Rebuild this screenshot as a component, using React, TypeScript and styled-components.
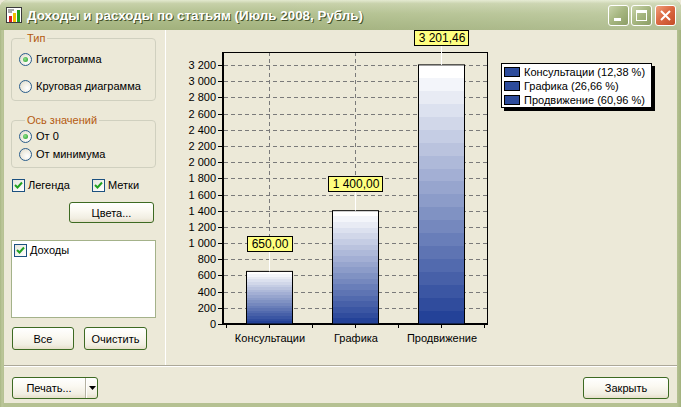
import React from 'react'
import styled, { createGlobalStyle } from 'styled-components'

const GlobalStyle = createGlobalStyle`
  html, body {
    margin: 0;
    padding: 0;
    background: #ece9d8;
  }
  body {
    font-family: "Liberation Sans", Arial, sans-serif;
    font-size: 11px;
    color: #000;
  }
`

const Window = styled.div`
  width: 681px;
  height: 407px;
  display: flex;
  flex-direction: column;
  background: linear-gradient(90deg, #a9b784 0, #bcc79a 2px, #b5c192 4px, #b5c192 calc(100% - 4px), #a3b27e 100%);
  border-radius: 8px 8px 0 0;
  overflow: hidden;
`

const TitleBar = styled.div`
  height: 30px;
  flex: none;
  display: flex;
  align-items: center;
  box-sizing: border-box;
  padding: 0 5px 0 6px;
  background:
    linear-gradient(90deg, rgba(255, 255, 255, 0) 40%, rgba(255, 255, 255, 0.18) 100%),
    linear-gradient(180deg, #e3e9cf 0%, #c6d0a8 12%, #b3c190 45%, #a9b885 75%, #a2b17d 100%);
`

const TitleText = styled.div`
  flex: 1;
  margin-left: 5px;
  font-size: 13.4px;
  font-weight: bold;
  color: #fff;
  text-shadow: 1px 1px 0 #45522a;
  white-space: nowrap;
`

const CaptionButton = styled.div<{ $close?: boolean }>`
  width: 21px;
  height: 21px;
  box-sizing: border-box;
  border: 1px solid #fff;
  border-radius: 3px;
  margin-left: ${p => (p.$close ? 3 : 2)}px;
  display: flex;
  align-items: center;
  justify-content: center;
  background: ${p =>
    p.$close
      ? 'linear-gradient(135deg, #f0a07c 0%, #dc6a43 45%, #c44c26 100%)'
      : 'linear-gradient(135deg, #c8d3aa 0%, #a5b57f 50%, #8c9e66 100%)'};
`

const Frame = styled.div`
  flex: 1;
  margin: 0 4px 4px;
  background: #ece9d8;
  display: flex;
  flex-direction: column;
`

const Main = styled.div`
  height: 335px;
  flex: none;
  display: flex;
  border-bottom: 1px solid #aca899;
`

const LeftPanel = styled.div`
  width: 161px;
  box-sizing: border-box;
  padding: 1px 9px 0 7px;
  display: flex;
  flex-direction: column;
`

const Group = styled.fieldset<{ $gap: number; $pad: string; $top?: number }>`
  margin: ${p => p.$top ?? 0}px 0 0;
  min-width: 0;
  border: 1px solid #d0d0bf;
  border-radius: 4px;
  padding: ${p => p.$pad};
  display: flex;
  flex-direction: column;
  gap: ${p => p.$gap}px;

  legend {
    color: #b45a10;
    padding: 0 2px;
    margin-left: 6px;
    line-height: 14px;
  }
`

const Option = styled.label`
  display: flex;
  align-items: center;
  height: 16px;
  gap: 4px;
  white-space: nowrap;
`

const Radio = styled.span<{ $on?: boolean }>`
  width: 13px;
  height: 13px;
  box-sizing: border-box;
  border-radius: 50%;
  border: 1px solid #2a5d8c;
  background: radial-gradient(circle at 65% 65%, #ffffff 0%, #eeebe0 55%, #d6d3c5 100%);
  display: flex;
  align-items: center;
  justify-content: center;

  &::after {
    content: '';
    display: ${p => (p.$on ? 'block' : 'none')};
    width: 5px;
    height: 5px;
    border-radius: 50%;
    background: radial-gradient(circle at 40% 40%, #8ee08e, #1f9a1f);
  }
`

const Check = styled.span`
  width: 13px;
  height: 13px;
  flex: none;
  box-sizing: border-box;
  border: 1px solid #1c5180;
  background: linear-gradient(135deg, #e6e6de, #ffffff);
  display: flex;
  align-items: center;
  justify-content: center;
`

const CheckRow = styled.div`
  display: flex;
  margin: 10px 0 0 1px;
`

const CheckItem = styled(Option)<{ $w?: number }>`
  width: ${p => (p.$w ? `${p.$w}px` : 'auto')};
  gap: 3px;
  height: 14px;
`

const Button = styled.button<{ $w: number; $h?: number }>`
  width: ${p => p.$w}px;
  height: ${p => p.$h ?? 22}px;
  box-sizing: border-box;
  padding: 0;
  border: 1px solid #3d6a22;
  border-radius: 3px;
  background: linear-gradient(180deg, #ffffff 0%, #fbf9f2 40%, #f1eee2 80%, #e6dfca 100%);
  font-family: inherit;
  font-size: 11px;
  color: #000;
  display: flex;
  align-items: center;
  justify-content: center;
`

const ColorsButton = styled(Button)`
  margin: 10px 0 0 58px;
`

const ListBox = styled.div`
  margin-top: 17px;
  height: 78px;
  box-sizing: border-box;
  border: 1px solid #a4b28a;
  background: #fff;
  padding: 2px 2px;
`

const ButtonRow = styled.div`
  display: flex;
  gap: 10px;
  margin: 9px 0 0 1px;
`

const ChartPanel = styled.div`
  flex: 1;
  border-left: 1px solid #fff;
  display: flex;
  align-items: flex-start;
`

const ChartSvg = styled.svg`
  flex: none;
  display: block;
  font-family: "Liberation Sans", Arial, sans-serif;
  font-size: 11px;
`

const Legend = styled.div`
  margin: 33px 0 0 5px;
  width: 151px;
  box-sizing: border-box;
  border: 1px solid #000;
  background: #fff;
  box-shadow: 3px 3px 0 #000;
  padding: 1px 2px 0 2px;
  display: flex;
  flex-direction: column;
`

const LegendRow = styled.div`
  display: flex;
  align-items: center;
  gap: 4px;
  height: 14px;
  white-space: nowrap;
`

const Swatch = styled.span`
  width: 16px;
  height: 10px;
  box-sizing: border-box;
  border: 1px solid #000;
  background: #2d4c9c;
`

const BottomBar = styled.div`
  flex: 1;
  border-top: 1px solid #fff;
  display: flex;
  justify-content: space-between;
  align-items: flex-start;
  padding: 10px 8px 0;
`

const SplitMain = styled.span`
  flex: 1;
  align-self: stretch;
  display: flex;
  align-items: center;
  justify-content: center;
  border-right: 1px solid #b5b2a2;
`

const SplitArrow = styled.span`
  width: 10px;
  display: flex;
  align-items: center;
  justify-content: center;
  border-left: 1px solid #fff;
  align-self: stretch;
`

const CheckMark = () => (
  <svg width="9" height="9" viewBox="0 0 9 9">
    <path d="M1 4 L3.5 6.5 L8 1.5" fill="none" stroke="#21a121" strokeWidth="2" />
  </svg>
)

const AppIcon = () => (
  <svg width="16" height="16" viewBox="0 0 16 16">
    <rect x="0.5" y="0.5" width="15" height="15" fill="#fff" stroke="#3a3a3a" />
    <rect x="2" y="2.5" width="6" height="1" fill="#555" />
    <rect x="2" y="4.5" width="4" height="1" fill="#555" />
    <rect x="3" y="9" width="3" height="6" fill="#e02020" />
    <rect x="7" y="6" width="3" height="9" fill="#f0c000" />
    <rect x="11" y="3" width="3" height="12" fill="#20a020" />
  </svg>
)

const bars = [
  { name: 'Консультации', value: 650, label: '650,00', share: '12,38', cx: 269 },
  { name: 'Графика', value: 1400, label: '1 400,00', share: '26,66', cx: 355 },
  { name: 'Продвижение', value: 3201.46, label: '3 201,46', share: '60,96', cx: 441 },
]

const X0 = 223
const X1 = 487
const Y0 = 324
const YT = 52
const yOf = (v: number) => Y0 - (v * (Y0 - 65)) / 3200
const fmt = (v: number) => (v >= 1000 ? `${Math.floor(v / 1000)} ${String(v % 1000).padStart(3, '0')}` : String(v))
const labelWidth = (s: string) =>
  s.split('').reduce((w, ch) => w + (ch === ' ' || ch === ',' ? 3 : 6.2), 0) + 11

function mix(t: number) {
  const a = [255, 255, 255]
  const b = [36, 66, 152]
  const c = a.map((x, i) => Math.round(x + (b[i] - x) * t))
  return `rgb(${c[0]},${c[1]},${c[2]})`
}

function BarChart() {
  const ticks = Array.from({ length: 17 }, (_, i) => i * 200)
  const N = 20
  const stops: React.ReactElement[] = []
  for (let i = 0; i < N; i++) {
    const c = mix(i / (N - 1))
    stops.push(<stop key={`a${i}`} offset={i / N} stopColor={c} />)
    stops.push(<stop key={`b${i}`} offset={(i + 1) / N} stopColor={c} />)
  }
  return (
    <ChartSvg width="330" height="335" viewBox="166 30 330 335">
      <defs>
        <linearGradient id="barFill" x1="0" y1="0" x2="0" y2="1">
          {stops}
        </linearGradient>
      </defs>
      {ticks.map(v => (
        <g key={v}>
          {v > 0 && (
            <line x1={X0 + 1} x2={X1} y1={Math.round(yOf(v)) + 0.5} y2={Math.round(yOf(v)) + 0.5} stroke="#7a7a7a" strokeDasharray="4 3" />
          )}
          <line x1={218} x2={X0} y1={Math.round(yOf(v)) + 0.5} y2={Math.round(yOf(v)) + 0.5} stroke="#000" />
          <text x={216} y={Math.round(yOf(v)) + 4} textAnchor="end">
            {fmt(v)}
          </text>
        </g>
      ))}
      {bars.map(b => (
        <line key={b.name} x1={b.cx + 0.5} x2={b.cx + 0.5} y1={YT} y2={Y0} stroke="#7a7a7a" strokeDasharray="4 3" />
      ))}
      <line x1={X0} x2={X1 + 0.5} y1={YT + 0.5} y2={YT + 0.5} stroke="#000" />
      <line x1={X1 + 0.5} x2={X1 + 0.5} y1={YT} y2={Y0} stroke="#000" />
      <line x1={X0} x2={X0} y1={YT} y2={Y0 + 1} stroke="#000" strokeWidth="2" />
      <line x1={X0} x2={X1 + 1} y1={Y0} y2={Y0} stroke="#000" strokeWidth="2" />
      {[226, 269, 312, 355, 398, 441, 484].map(x => (
        <line key={x} x1={x + 0.5} x2={x + 0.5} y1={Y0} y2={Y0 + 4} stroke="#000" />
      ))}
      {bars.map(b => {
        const top = yOf(b.value)
        const w = labelWidth(b.label)
        const boxBottom = Math.round(top) - 19
        return (
          <g key={b.name}>
            <rect x={b.cx - 22.5} y={top} width={46} height={Y0 - top} fill="url(#barFill)" stroke="#000" />
            <line x1={b.cx + 0.5} x2={b.cx + 0.5} y1={boxBottom} y2={top} stroke="#fff" />
            <rect x={Math.round(b.cx - w / 2) + 0.5} y={boxBottom - 15.5} width={Math.round(w)} height={15} fill="#ffff80" stroke="#000" />
            <text x={b.cx + 1} y={boxBottom - 4} textAnchor="middle" fontSize="12">
              {b.label}
            </text>
            <text x={b.cx + 1} y={342} textAnchor="middle">
              {b.name}
            </text>
          </g>
        )
      })}
    </ChartSvg>
  )
}

export default function App() {
  return (
    <>
      <GlobalStyle />
      <Window>
        <TitleBar>
          <AppIcon />
          <TitleText>Доходы и расходы по статьям (Июль 2008, Рубль)</TitleText>
          <CaptionButton>
            <svg width="19" height="19" viewBox="0 0 19 19">
              <rect x="5" y="12" width="7" height="3" fill="#fff" />
            </svg>
          </CaptionButton>
          <CaptionButton>
            <svg width="19" height="19" viewBox="0 0 19 19">
              <rect x="4.5" y="4.5" width="10" height="10" fill="none" stroke="#fff" />
              <rect x="4" y="4" width="11" height="3" fill="#fff" />
            </svg>
          </CaptionButton>
          <CaptionButton $close>
            <svg width="19" height="19" viewBox="0 0 19 19">
              <path d="M5 5 L14 14 M14 5 L5 14" stroke="#fff" strokeWidth="2" />
            </svg>
          </CaptionButton>
        </TitleBar>
        <Frame>
          <Main>
            <LeftPanel>
              <Group $gap={11} $pad="6px 6px 6px 7px">
                <legend>Тип</legend>
                <Option>
                  <Radio $on />
                  Гистограмма
                </Option>
                <Option>
                  <Radio />
                  Круговая диаграмма
                </Option>
              </Group>
              <Group $gap={2} $pad="1px 6px 5px 7px" $top={12}>
                <legend>Ось значений</legend>
                <Option>
                  <Radio $on />
                  От 0
                </Option>
                <Option>
                  <Radio />
                  От минимума
                </Option>
              </Group>
              <CheckRow>
                <CheckItem $w={80}>
                  <Check>
                    <CheckMark />
                  </Check>
                  Легенда
                </CheckItem>
                <CheckItem>
                  <Check>
                    <CheckMark />
                  </Check>
                  Метки
                </CheckItem>
              </CheckRow>
              <ColorsButton $w={85} $h={21}>
                Цвета...
              </ColorsButton>
              <ListBox>
                <CheckItem>
                  <Check>
                    <CheckMark />
                  </Check>
                  Доходы
                </CheckItem>
              </ListBox>
              <ButtonRow>
                <Button $w={62} $h={23}>
                  Все
                </Button>
                <Button $w={63} $h={23}>
                  Очистить
                </Button>
              </ButtonRow>
            </LeftPanel>
            <ChartPanel>
              <BarChart />
              <Legend>
                {bars.map(b => (
                  <LegendRow key={b.name}>
                    <Swatch />
                    {b.name} ({b.share} %)
                  </LegendRow>
                ))}
              </Legend>
            </ChartPanel>
          </Main>
          <BottomBar>
            <Button $w={86}>
              <SplitMain>Печать...</SplitMain>
              <SplitArrow>
                <svg width="7" height="4" viewBox="0 0 7 4">
                  <path d="M0 0 H7 L3.5 4 Z" fill="#000" />
                </svg>
              </SplitArrow>
            </Button>
            <Button $w={86}>Закрыть</Button>
          </BottomBar>
        </Frame>
      </Window>
    </>
  )
}
